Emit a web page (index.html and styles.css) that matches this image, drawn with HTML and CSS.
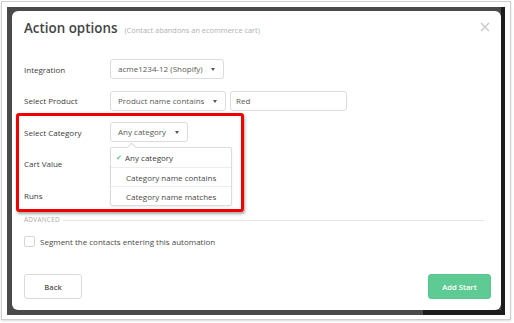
FILE: index.html
```html
<!DOCTYPE html>
<html>
<head>
<meta charset="utf-8">
<link rel="stylesheet" href="styles.css">
</head>
<body>
<div class="frame">
  <div class="backdrop">
    <div class="modal">
      <div class="header">
        <h1 class="title">Action options</h1>
        <span class="subtitle">(Contact abandons an ecommerce cart)</span>
      </div>
      <button class="close" aria-label="Close">
        <svg width="10" height="10" viewBox="0 0 10 10"><path d="M1 1 L9 9 M9 1 L1 9" stroke="#c9c9c9" stroke-width="1.4" fill="none"/></svg>
      </button>

      <div class="form">
        <div class="row">
          <div class="label">Integration</div>
          <div class="select w-int">acme1234-12 (Shopify)<span class="caret"></span></div>
        </div>
        <div class="row">
          <div class="label">Select Product</div>
          <div class="select w-prod">Product name contains<span class="caret"></span></div>
          <div class="input">Red</div>
        </div>
        <div class="row">
          <div class="label">Select Category</div>
          <div class="select w-cat">Any category<span class="caret"></span></div>
        </div>
        <div class="row">
          <div class="label">Cart Value</div>
        </div>
        <div class="row">
          <div class="label">Runs</div>
        </div>

        <ul class="menu">
          <li class="item active"><span class="check">✔</span>Any category</li>
          <li class="item">Category name contains</li>
          <li class="item">Category name matches</li>
        </ul>
        <div class="highlight"></div>
      </div>

      <div class="advanced">
        <span class="adv-label">ADVANCED</span>
        <span class="adv-line"></span>
      </div>
      <label class="check-row">
        <span class="checkbox"></span>
        <span>Segment the contacts entering this automation</span>
      </label>

      <div class="footer">
        <button class="btn btn-back">Back</button>
        <button class="btn btn-add">Add Start</button>
      </div>
    </div>
  </div>
</div>
</body>
</html>
```

FILE: styles.css
```css
* { box-sizing: border-box; }
html, body { margin: 0; padding: 0; background: #fff; }
body {
  width: 514px; height: 323px; overflow: hidden;
  font-family: "Open Sans", "Noto Sans", sans-serif;
  color: #444;
}
.frame {
  margin: 1px 0 0 1px;
  width: 510px; height: 319px;
  border: 1px solid #cfcfcf;
  box-shadow: 0 1px 2px rgba(0,0,0,0.15);
  padding: 5px 4px 3px 5px;
  background: #fff;
}
.backdrop {
  width: 498px; height: 308px;
  padding: 4px 4px 5px 5px;
  background:
    linear-gradient(#1d1d1d, #1d1d1d) right top / 4px 100% no-repeat,
    linear-gradient(#1d1d1d, #1d1d1d) right bottom / 82px 5px no-repeat,
    #4a4a4a;
}
.modal {
  position: relative;
  width: 489px; height: 299px;
  background: #fff;
  border-radius: 6px;
  padding: 9px 10px 11px 12px;
  display: flex; flex-direction: column;
}
.header { display: flex; align-items: baseline; height: 16px; }
.title {
  margin: 0; font-size: 13.4px; line-height: 16px; font-weight: 600; color: #444;
}
.subtitle { margin-left: 7px; font-size: 7.4px; color: #b0b0b0; }
.close {
  position: absolute; top: 11px; right: 11px;
  width: 10px; height: 10px; padding: 0; border: 0; background: none;
}
.close svg { display: block; }

.form {
  position: relative;
  margin-top: 23px;
  display: flex; flex-direction: column; gap: 11.5px;
}
.row { display: flex; align-items: center; height: 20px; font-size: 8px; }
.label { width: 86px; color: #3c3c3c; }
.select, .input {
  position: relative;
  height: 20px; line-height: 18px;
  border: 1px solid #dcdcdc; border-radius: 3px;
  padding: 0 7px; color: #5a5a5a; background: #fff;
}
.w-int { width: 114px; }
.w-prod { width: 116px; }
.w-cat { width: 78px; }
.input { width: 117px; margin-left: 4px; padding: 0 5px; }
.caret {
  position: absolute; right: 8px; top: 8px;
  border-left: 2.5px solid transparent; border-right: 2.5px solid transparent;
  border-top: 3px solid #555;
}
.menu {
  position: absolute; left: 86px; top: 88px;
  width: 122px; margin: 0; padding: 0; list-style: none;
  background: #fff; border: 1px solid #dcdcdc; border-radius: 2px;
  box-shadow: 0 1px 2px rgba(0,0,0,0.08);
  font-size: 8px; color: #4a4a4a;
}
.menu::before {
  content: ""; position: absolute; left: 17px; top: -4px;
  width: 6px; height: 6px; background: #fff;
  border-left: 1px solid #dcdcdc; border-top: 1px solid #dcdcdc;
  transform: rotate(45deg);
}
.item {
  position: relative;
  height: 19px; line-height: 19px; padding-left: 15px;
  border-top: 1px solid #ececec;
}
.item.active { border-top: 0; height: 19px; padding-left: 14px; color: #3c3c3c; }
.check {
  position: absolute; left: 5px; top: 0; font-size: 7px; color: #5cc48c;
}
.highlight {
  position: absolute; left: -8px; top: 54px;
  width: 228px; height: 99px;
  border: 3px solid #f00000; border-radius: 3px;
  box-shadow: 1px 2px 3px rgba(0,0,0,0.35);
}

.advanced {
  margin-top: 10px;
  display: flex; align-items: flex-end; height: 8px;
  margin-right: 7px;
}
.adv-label { font-size: 6.4px; letter-spacing: 0.3px; color: #aaa; line-height: 7px; }
.adv-line { flex: 1; border-bottom: 1px solid #e6e6e6; margin-bottom: 2px; margin-left: 3px; }

.check-row {
  margin-top: 12px;
  display: flex; align-items: center; gap: 5px;
  font-size: 8px; color: #4a4a4a; height: 12px;
}
.checkbox {
  width: 11px; height: 11px; border: 1px solid #d6d6d6; border-radius: 2px; background: #fff;
}

.footer {
  margin-top: auto;
  display: flex; justify-content: space-between; align-items: flex-end;
}
.btn {
  height: 25px; border-radius: 3px; font-family: inherit;
  font-size: 7.6px; font-weight: 600; padding: 0; cursor: pointer;
}
.btn-back { width: 58px; background: #fff; border: 1px solid #dadada; color: #555; }
.btn-add { width: 63px; background: #5fcb94; border: 1px solid #5ac58e; color: #fff; }
```
